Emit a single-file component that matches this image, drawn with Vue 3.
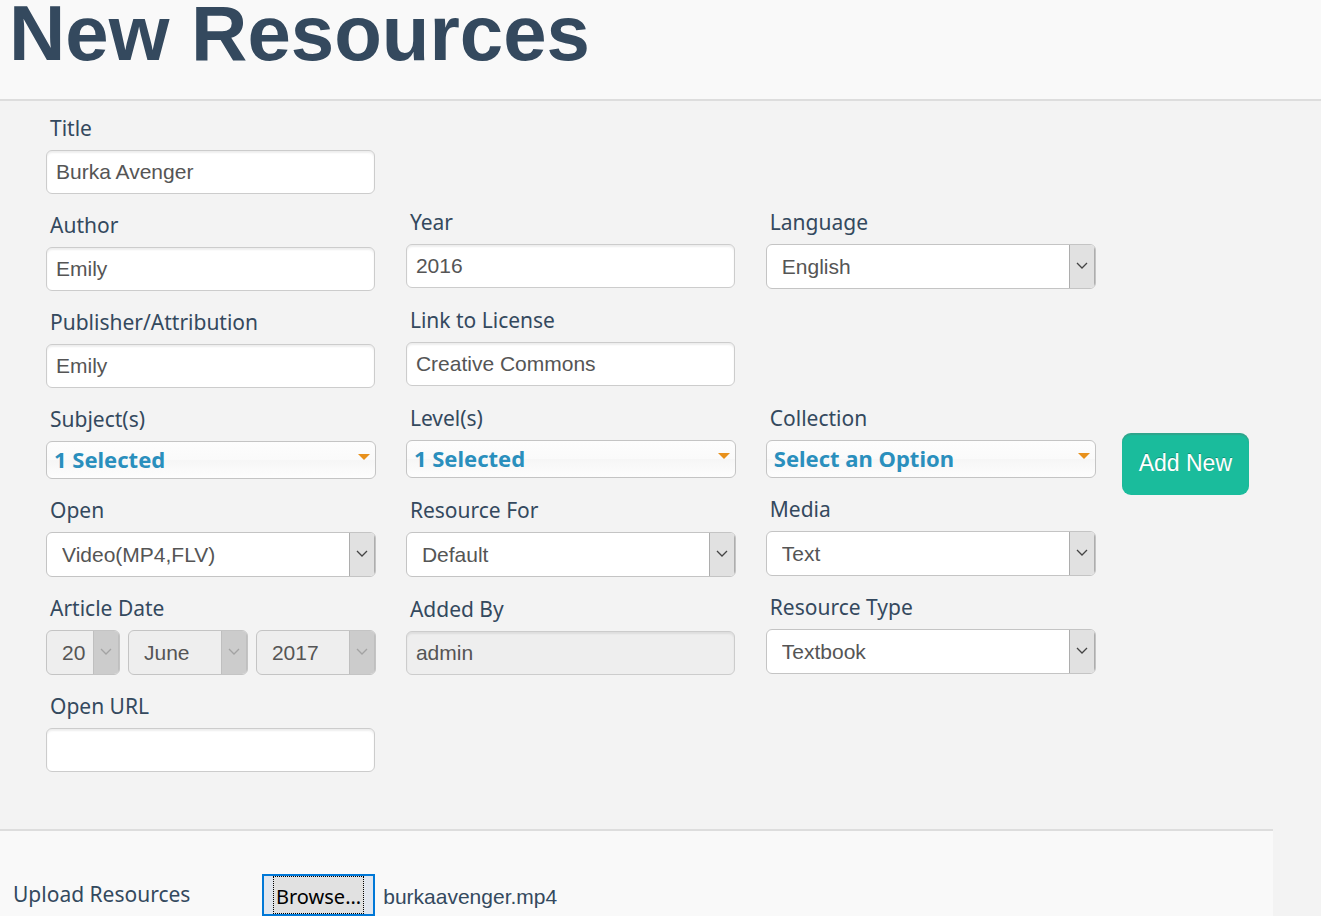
<script setup>
import { ref } from 'vue'

const columns = ref([
  [
    { id: 'title', label: 'Title', type: 'text', value: 'Burka Avenger' },
    { id: 'author', label: 'Author', type: 'text', value: 'Emily' },
    { id: 'publisher', label: 'Publisher/Attribution', type: 'text', value: 'Emily' },
    { id: 'subjects', label: 'Subject(s)', type: 'picker', value: '1 Selected' },
    { id: 'open', label: 'Open', type: 'select', value: 'Video(MP4,FLV)' },
    {
      id: 'day', label: 'Article Date', type: 'date',
      parts: [
        { id: 'day', name: 'Day', value: '20' },
        { id: 'month', name: 'Month', value: 'June' },
        { id: 'date-year', name: 'Year', value: '2017' },
      ],
    },
    { id: 'url', label: 'Open URL', type: 'text', value: '' },
  ],
  [
    { id: 'year', label: 'Year', type: 'text', value: '2016' },
    { id: 'license', label: 'Link to License', type: 'text', value: 'Creative Commons' },
    { id: 'levels', label: 'Level(s)', type: 'picker', value: '1 Selected' },
    { id: 'resource-for', label: 'Resource For', type: 'select', value: 'Default' },
    { id: 'added-by', label: 'Added By', type: 'text', value: 'admin', disabled: true },
  ],
  [
    { id: 'language', label: 'Language', type: 'select', value: 'English', last: true },
    { id: 'collection', label: 'Collection', type: 'picker', value: 'Select an Option' },
    { id: 'media', label: 'Media', type: 'select', value: 'Text' },
    { id: 'resource-type', label: 'Resource Type', type: 'select', value: 'Textbook' },
  ],
])

const fileInput = ref(null)
const fileName = ref('burkaavenger.mp4')

function onFile(event) {
  const file = event.target.files[0]
  if (file) fileName.value = file.name
}
</script>

<template>
  <div class="page">
    <header class="head">
      <h1>New Resources</h1>
    </header>

    <form class="form" @submit.prevent>
      <div class="columns">
        <div v-for="(fields, i) in columns" :key="i" class="column" :class="'column-' + (i + 1)">
          <div v-for="f in fields" :key="f.id" class="field" :class="{ 'group-end': f.last }">
            <label :for="f.id">{{ f.label }}</label>

            <input v-if="f.type === 'text'" :id="f.id" v-model="f.value" class="text" type="text" :disabled="f.disabled">

            <div v-else-if="f.type === 'picker'" class="picker">
              <select :id="f.id"><option>{{ f.value }}</option></select>
              <span class="caret"></span>
            </div>

            <div v-else-if="f.type === 'select'" class="select">
              <select :id="f.id"><option>{{ f.value }}</option></select>
              <span class="arrow">
                <svg width="12" height="8" viewBox="0 0 12 8"><path d="M1 1l5 5 5-5" /></svg>
              </span>
            </div>

            <div v-else class="date">
              <div v-for="p in f.parts" :key="p.id" class="select disabled">
                <select :id="p.id" :aria-label="p.name" disabled><option>{{ p.value }}</option></select>
                <span class="arrow">
                  <svg width="12" height="8" viewBox="0 0 12 8"><path d="M1 1l5 5 5-5" /></svg>
                </span>
              </div>
            </div>
          </div>
        </div>
      </div>
      <button type="button" class="add">Add New</button>
    </form>

    <section class="upload">
      <label class="upload-label" for="file">Upload Resources</label>
      <input id="file" ref="fileInput" type="file" hidden @change="onFile">
      <button type="button" class="browse" @click="fileInput.click()"><span>Browse...</span></button>
      <span class="file-name">{{ fileName }}</span>
    </section>
  </div>
</template>

<style>
body {
  background: #f3f3f3;
}
</style>

<style scoped>
* {
  box-sizing: border-box;
}

.page {
  display: flex;
  flex-direction: column;
  min-height: 100vh;
  color: #34495e;
  font-family: "Noto Sans", sans-serif;
  font-size: 21px;
}

.head {
  padding: 0 9px 33px;
  background: #f9f9f9;
  border-bottom: 2px solid #ddd;
}

h1 {
  margin: 0;
  font: bold 78px/66px "Liberation Sans", Arial, sans-serif;
}

.form {
  display: flex;
  align-items: flex-start;
  gap: 26px;
  padding: 13px 72px 57px 46px;
}

.columns {
  flex: 1;
  display: grid;
  grid-template-columns: repeat(3, minmax(0, 1fr));
  column-gap: 30px;
}

.column {
  display: flex;
  flex-direction: column;
  gap: 17px;
}

.column-2 {
  gap: 18px;
}

.column-2,
.column-3 {
  padding-top: 94px;
}

.field {
  display: flex;
  flex-direction: column;
  gap: 7px;
}

.group-end {
  margin-bottom: 98px;
}

.field label {
  padding-left: 4px;
  line-height: 29px;
}

.text,
.select select {
  color: #555;
  font: 21px "Liberation Sans", Arial, sans-serif;
}

.text {
  height: 44px;
  margin-right: 1px;
  padding: 0 9px;
  background: #fff;
  border: 1px solid #ccc;
  border-radius: 6px;
  box-shadow: inset 0 2px 2px rgba(0, 0, 0, 0.07);
}

.text:disabled {
  background: #eee;
}

.select,
.picker {
  position: relative;
  overflow: hidden;
  border: 1px solid #c4c4c4;
  border-radius: 6px;
}

.select {
  height: 45px;
  background: #fff;
}

.select select,
.picker select {
  display: block;
  width: 100%;
  height: 100%;
  margin: 0;
  border: 0;
  outline: 0;
  background: transparent;
  appearance: none;
  opacity: 1;
}

.select select {
  padding: 0 26px 0 15px;
}

.arrow {
  position: absolute;
  top: 0;
  right: 0;
  bottom: 0;
  display: flex;
  align-items: center;
  justify-content: center;
  width: 26px;
  padding-bottom: 2px;
  background: #e1e1e1;
  border: 1px solid #adadad;
  border-width: 0 1px 0 1px;
  pointer-events: none;
}

.arrow path {
  fill: none;
  stroke: #444;
  stroke-width: 1.3;
}

.disabled {
  background: #eee;
}

.disabled .arrow {
  background: #ccc;
  border-color: #bfbfbf;
}

.disabled .arrow path {
  stroke: #a3a3a3;
}

.date {
  display: grid;
  grid-template-columns: 74fr 120fr 120fr;
  gap: 8px;
}

.picker {
  height: 38px;
  background: linear-gradient(#fdfdfd, #fafafa 50%, #f6f6f6 50%, #fdfdfd);
}

.picker select {
  padding: 0 26px 2px 7px;
  color: #2a8fbd;
  font: bold 22px "Noto Sans", sans-serif;
}

.caret {
  position: absolute;
  top: 12px;
  right: 5px;
  border: 6px solid transparent;
  border-top-color: #e8911c;
  border-bottom-width: 0;
  pointer-events: none;
}

.add {
  height: 62px;
  margin-top: 319px;
  padding: 0 17px 2px;
  color: #fff;
  font: 23px "Liberation Sans", Arial, sans-serif;
  text-shadow: 0 -1px 0 rgba(0, 0, 0, 0.25);
  background: #1abc9c;
  border: 0;
  border-radius: 9px;
  box-shadow: inset 0 2px 1px rgba(90, 120, 110, 0.35);
}

.upload {
  flex: 1;
  display: flex;
  align-items: flex-start;
  margin-right: 48px;
  padding: 43px 13px 0;
  background: #f9f9f9;
  border-top: 2px solid #ddd;
}

.upload-label {
  width: 249px;
  line-height: 40px;
}

.browse {
  height: 42px;
  padding: 0 9px;
  color: #000;
  font: 20px "Noto Sans", sans-serif;
  background: #e1e6ee;
  border: 2px solid #0078d7;
}

.browse span {
  display: block;
  padding: 3px 2px 0;
  line-height: 33px;
  background: #e1e1e1;
  border: 1px dotted #000;
}

.file-name {
  padding-left: 8px;
  font: 21px/46px "Liberation Sans", Arial, sans-serif;
}
</style>
